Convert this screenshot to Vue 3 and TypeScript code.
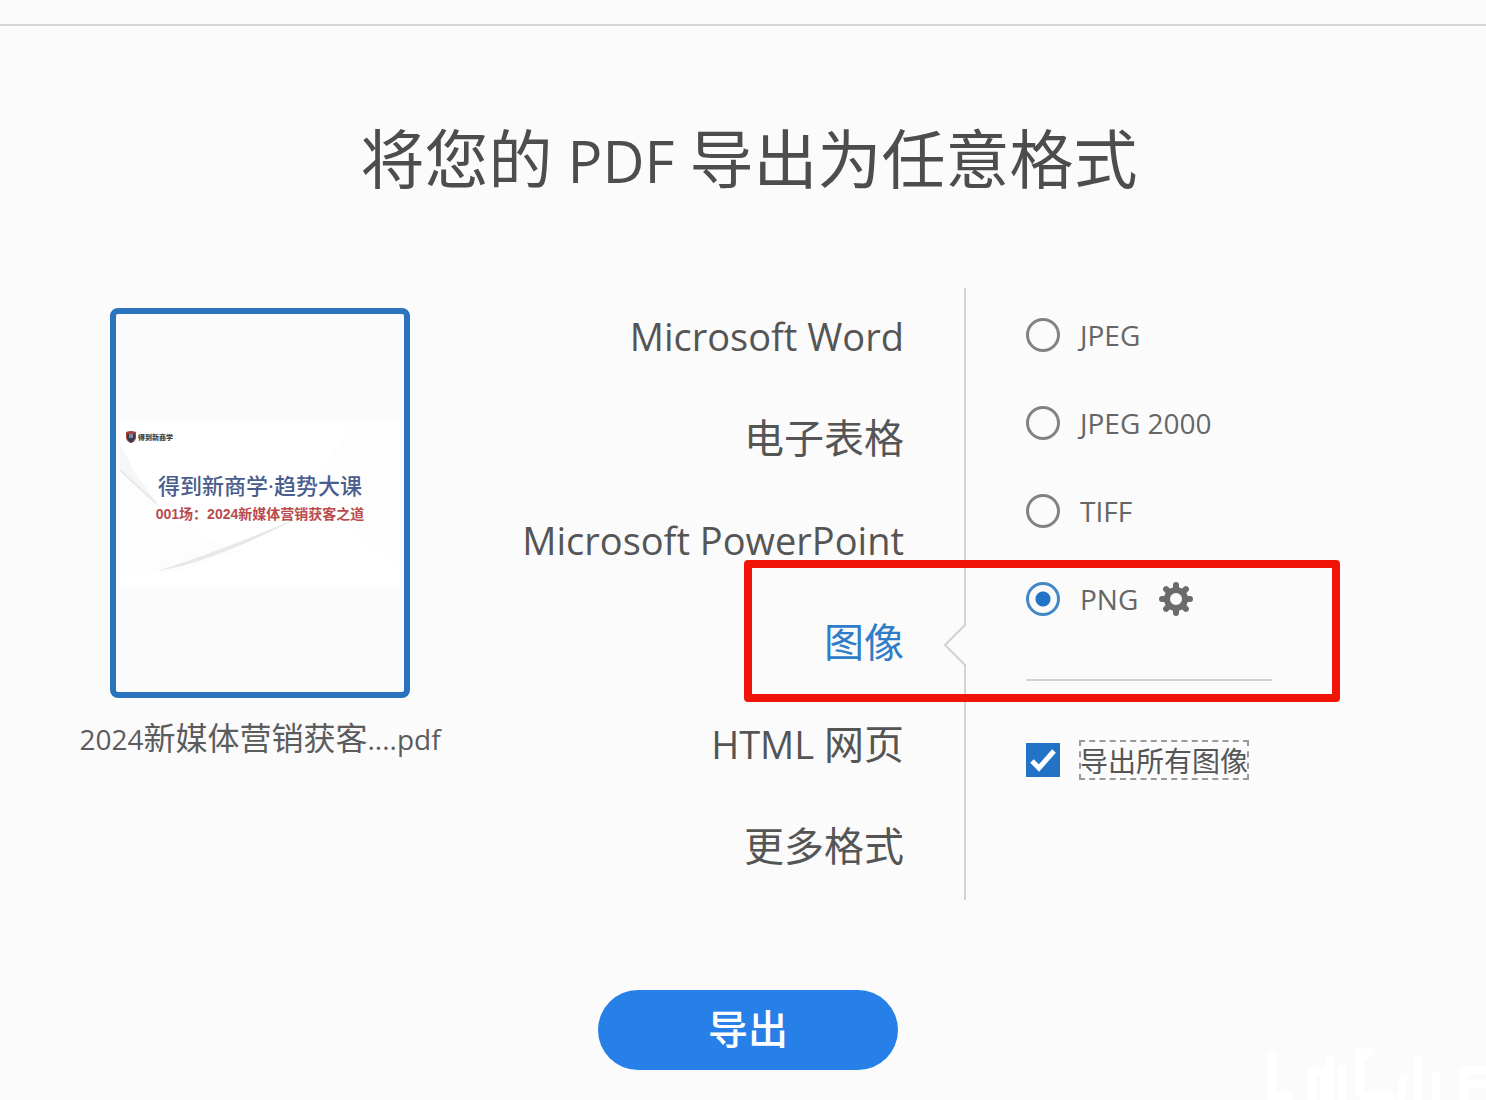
<script setup lang="ts">
import { ref } from 'vue'

interface Run {
  text: string
  latin?: boolean
}

interface Target {
  id: string
  runs: Run[]
}

const targets: Target[] = [
  { id: 'word', runs: [{ text: 'Microsoft Word', latin: true }] },
  { id: 'sheet', runs: [{ text: '电子表格' }] },
  { id: 'ppt', runs: [{ text: 'Microsoft PowerPoint', latin: true }] },
  { id: 'image', runs: [{ text: '图像' }] },
  { id: 'html', runs: [{ text: 'HTML ', latin: true }, { text: '网页' }] },
  { id: 'more', runs: [{ text: '更多格式' }] },
]

const formats: string[] = ['JPEG', 'JPEG 2000', 'TIFF', 'PNG']

const target = ref<string>('image')
const format = ref<string>('PNG')
const exportAll = ref<boolean>(true)
</script>

<template>
  <div class="page">
    <header class="topbar"></header>
    <main class="export">
      <h1 class="title">将您的<span class="latin"> PDF </span>导出为任意格式</h1>

      <div class="stage">
        <figure class="file">
          <div class="thumb">
            <div class="slide">
              <svg class="folds" viewBox="0 0 280 164" preserveAspectRatio="none" aria-hidden="true">
                <path d="M0 22 L14 50 L44 92 L30 84 L0 50 Z" fill="#f6f6f7" />
                <path d="M0 50 Q34 86 76 114 L120 130 L60 150 L0 156 Z" fill="#fdfdfd" />
                <path d="M0 49 L36 82" stroke="#e8e8ea" stroke-width="2" />
                <path d="M36 150 Q90 134 180 96 Q130 122 90 136 Q60 147 36 150 Z" fill="#e8e8e9" />
                <path d="M280 0 L236 0 L190 64 L280 150 Z" fill="#fdfdfd" />
              </svg>
              <div class="brand">
                <svg class="shield" viewBox="0 0 10 12" aria-hidden="true">
                  <path d="M0 1 Q5 -1 10 1 V7 Q9 11 5 12 Q1 11 0 7 Z" fill="#a5413f" />
                  <path d="M1 3 H9 V7 Q8 10 5 12 Q2 10 1 7 Z" fill="#343c5c" />
                  <path d="M3 4 H7 M3 6 H7" stroke="#d8cfd4" stroke-width="1" />
                </svg>
                <span>得到新商学</span>
              </div>
              <p class="slide-title">得到新商学<span class="dot">·</span>趋势大课</p>
              <p class="slide-sub">001场：2024新媒体营销获客之道</p>
            </div>
          </div>
          <figcaption class="filename"><span class="latin">2024</span>新媒体营销获客<span class="latin">....pdf</span></figcaption>
        </figure>

        <ul class="targets">
          <li v-for="t in targets" :key="t.id">
            <button type="button" class="target" :class="{ active: t.id === target }" @click="target = t.id">
              <span v-for="(r, i) in t.runs" :key="i" :class="{ latin: r.latin }">{{ r.text }}</span>
            </button>
            <svg v-if="t.id === target" class="notch" viewBox="0 0 22 42" aria-hidden="true">
              <path d="M22 1 H20 V2 L1 21 L20 40 V41 H22 Z" fill="#fbfbfb" />
              <path d="M21 0 V1 L1 21 L21 41 V42" fill="none" stroke="#d2d2d2" stroke-width="2" />
            </svg>
          </li>
        </ul>

        <section class="options">
          <div class="formats">
            <div v-for="f in formats" :key="f" class="row">
              <label class="choice">
                <input v-model="format" type="radio" name="format" :value="f" />
                <span>{{ f }}</span>
              </label>
              <button v-if="f === 'PNG'" type="button" class="gear" aria-label="PNG">
                <svg viewBox="-18 -18 36 36" aria-hidden="true">
                  <g fill="#6b6b6b">
                    <rect v-for="a in 8" :key="a" x="-3" y="-17" width="6" height="10" rx="3" :transform="`rotate(${a * 45})`" />
                  </g>
                  <circle r="9" fill="none" stroke="#6b6b6b" stroke-width="6" />
                </svg>
              </button>
            </div>
          </div>
          <label class="choice all">
            <input v-model="exportAll" type="checkbox" />
            <span class="focus">导出所有图像</span>
          </label>
          <div class="marker"></div>
        </section>
      </div>

      <button type="button" class="submit">导出</button>
    </main>
    <svg class="corner" viewBox="0 0 222 54" aria-hidden="true">
      <path d="M8 4 V54 M8 50 H28 M48 54 V26 H60 V54 M66 10 V54 M78 20 V54 M96 2 V50 M96 12 L108 4 M96 50 H130 M140 30 L136 54 M154 10 V54 M172 26 V54 M200 54 V24 H222 M200 38 H222" fill="none" stroke="#fff" stroke-width="8" />
    </svg>
  </div>
</template>

<style>
body {
  margin: 0;
  background: #fbfbfb;
}
</style>

<style scoped>
.page {
  position: relative;
  min-height: 100vh;
  overflow: hidden;
  box-sizing: border-box;
  background: #fbfbfb;
  color: #505050;
  font-family: 'Open Sans', 'Noto Sans CJK SC', sans-serif;
}
.topbar {
  height: 24px;
  border-bottom: 2px solid #d7d7d7;
}
.export {
  display: flex;
  flex-direction: column;
  align-items: center;
  padding: 80px 80px 30px;
}
.title {
  margin: 0 0 84px 12px;
  font-family: 'Noto Sans CJK SC', sans-serif;
  font-size: 64px;
  line-height: 98px;
  font-weight: 400;
  color: #4d4d4d;
}
.title .latin {
  font-size: 58px;
}
.latin {
  font-family: 'Open Sans', sans-serif;
  line-height: 1;
}
.stage {
  align-self: stretch;
  display: grid;
  grid-template-columns: 360px minmax(0, 1fr) 442px;
}
.file {
  margin: 0;
  padding-top: 20px;
  display: flex;
  flex-direction: column;
  align-items: center;
}
.thumb {
  box-sizing: border-box;
  width: 300px;
  height: 390px;
  border: 6px solid #2a73bd;
  border-radius: 8px;
  display: flex;
  align-items: center;
  justify-content: center;
}
.slide {
  position: relative;
  box-sizing: border-box;
  width: 280px;
  height: 164px;
  padding: 10px 6px;
  background: #fff;
}
.folds {
  position: absolute;
  inset: 0;
  width: 100%;
  height: 100%;
}
.brand {
  position: relative;
  display: flex;
  align-items: center;
  gap: 2px;
  height: 12px;
  font: 900 7px/12px 'Noto Sans CJK SC', sans-serif;
  color: #444;
}
.shield {
  width: 10px;
  height: 12px;
}
.slide-title,
.slide-sub {
  position: relative;
  margin: 0;
  text-align: center;
  white-space: nowrap;
}
.slide-title {
  margin-top: 26px;
  font: 500 22px/30px 'Noto Sans CJK SC', sans-serif;
  color: #4b5d8c;
}
.dot {
  font-family: 'Open Sans', sans-serif;
}
.slide-sub {
  margin-top: 4px;
  font: 700 14px/20px 'Liberation Sans', 'Noto Sans CJK SC', sans-serif;
  color: #b94a4d;
}
.filename {
  margin-top: 16px;
  font-family: 'Noto Sans CJK SC', sans-serif;
  font-size: 32px;
  line-height: 44px;
  color: #5c5c5c;
  white-space: nowrap;
}
.filename .latin {
  font-size: 28px;
}
.targets {
  margin: 0;
  padding: 0;
  list-style: none;
}
.targets li {
  position: relative;
  height: 102px;
}
.target {
  width: 100%;
  height: 92px;
  padding: 0 60px 0 0;
  border: 0;
  background: none;
  color: #555;
  font-family: 'Noto Sans CJK SC', sans-serif;
  font-size: 40px;
  line-height: 60px;
  text-align: right;
  white-space: pre;
  cursor: pointer;
}
.target .latin {
  font-size: 38px;
}
.target.active {
  color: #2f7dc9;
}
.notch {
  position: absolute;
  right: -2px;
  top: 30px;
  width: 22px;
  height: 42px;
  z-index: 1;
}
.options {
  position: relative;
  border-left: 2px solid #d2d2d2;
  padding-left: 60px;
}
.formats {
  display: flex;
  flex-direction: column;
  gap: 40px;
  width: 246px;
  padding: 23px 0 56px;
  border-bottom: 2px solid #d2d2d2;
}
.row {
  display: flex;
  align-items: center;
  gap: 20px;
  height: 48px;
}
.choice {
  display: flex;
  align-items: center;
  gap: 20px;
  font-size: 28px;
  line-height: 36px;
  color: #666;
}
.choice input {
  appearance: none;
  box-sizing: border-box;
  flex: none;
  width: 34px;
  height: 34px;
  margin: 0;
}
.choice input[type='radio'] {
  border: 3px solid #828282;
  border-radius: 50%;
}
.choice input[type='radio']:checked {
  border-color: #4287c6;
  background: radial-gradient(circle, #2274c6 7px, #fbfbfb 8px);
}
.choice input[type='checkbox'] {
  background: #2273c6 url("data:image/svg+xml,%3Csvg xmlns='http://www.w3.org/2000/svg' viewBox='0 0 34 34'%3E%3Cpath d='M6 18 L13 25 L28 8' fill='none' stroke='white' stroke-width='5'/%3E%3C/svg%3E");
}
.gear {
  width: 36px;
  height: 36px;
  padding: 0;
  border: 0;
  background: none;
  cursor: pointer;
}
.gear svg {
  display: block;
}
.all {
  width: max-content;
  margin-top: 60px;
}
.choice .focus {
  font-family: 'Noto Sans CJK SC', sans-serif;
  outline: 2px dashed #999;
  outline-offset: -1px;
  line-height: 38px;
  color: #555;
}
.marker {
  position: absolute;
  top: 272px;
  left: -222px;
  right: 66px;
  height: 142px;
  box-sizing: border-box;
  border: 8px solid #f01409;
  border-radius: 4px;
  pointer-events: none;
  z-index: 2;
}
.submit {
  width: 300px;
  height: 80px;
  margin: 90px 0 0 10px;
  padding: 0 0 6px;
  border: 0;
  border-radius: 40px;
  background: #2680e8;
  color: #fff;
  font-family: 'Noto Sans CJK SC', sans-serif;
  font-size: 40px;
  line-height: 60px;
  font-weight: 500;
  cursor: pointer;
}
.corner {
  position: absolute;
  right: 0;
  bottom: 0;
  width: 222px;
  height: 54px;
}
</style>
